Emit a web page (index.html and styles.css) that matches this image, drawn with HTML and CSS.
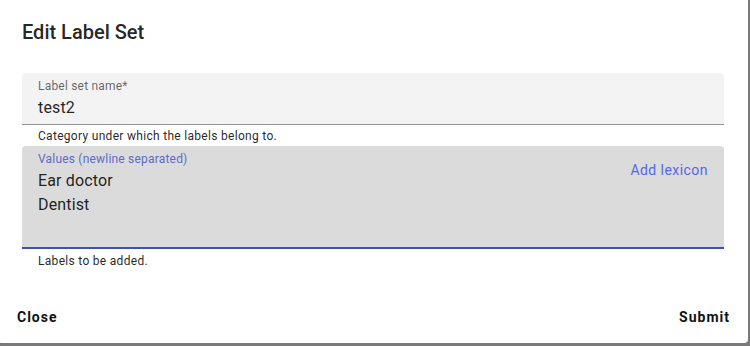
FILE: index.html
```html
<!DOCTYPE html>
<html lang="en">
  <head>
    <meta charset="UTF-8" />
    <meta name="viewport" content="width=device-width, initial-scale=1.0" />
    <title>Edit Label Set</title>
    <link rel="stylesheet" href="styles.css">
  </head>
  <body>
    <div class="dialog">
      <h2 class="dialog-title">Edit Label Set</h2>

      <div class="dialog-content">
        <div class="field">
          <div class="field-main">
            <label class="field-label">Label set name*</label>
            <div class="field-value">test2</div>
          </div>
        </div>
        <p class="helper">Category under which the labels belong to.</p>

        <div class="field field-focused">
          <div class="field-main">
            <label class="field-label">Values (newline separated)</label>
            <div class="field-value">Ear doctor<br />Dentist</div>
          </div>
          <button class="text-btn lexicon-btn">Add lexicon</button>
        </div>
        <p class="helper helper-last">Labels to be added.</p>
      </div>

      <div class="dialog-actions">
        <button class="text-btn action-btn">Close</button>
        <button class="text-btn action-btn">Submit</button>
      </div>
    </div>
  </body>
</html>
```

FILE: styles.css
```css
body {
  margin: 0;
  padding: 0;
  background-color: #7a7a7a;
  font-family: Roboto, "Liberation Sans", sans-serif;
  overflow: hidden;
}
.dialog {
  width: 750px;
  height: 343px;
  margin-left: -2px;
  background-color: #fff;
  border-radius: 0 0 4px 4px;
  display: flex;
  flex-direction: column;
  box-sizing: border-box;
}
.dialog-title {
  margin: 0;
  padding: 16px 24px 12px;
  font-size: 20px;
  line-height: 32px;
  font-weight: 500;
  color: rgba(0, 0, 0, 0.87);
}
.dialog-content {
  padding: 13px 24px 0;
}
.field {
  display: flex;
  align-items: flex-start;
  background-color: #f3f3f3;
  border-radius: 4px 4px 0 0;
  border-bottom: 1px solid #949494;
  padding: 5px 16px 4px;
}
.field-main {
  flex: 1;
}
.field-label {
  display: block;
  font-size: 12px;
  line-height: 16px;
  color: rgba(0, 0, 0, 0.6);
  letter-spacing: 0.2px;
}
.field-value {
  margin-top: 1.5px;
  font-size: 16px;
  line-height: 24px;
  color: rgba(0, 0, 0, 0.87);
  letter-spacing: 0.15px;
}
.field-focused {
  background-color: #dbdbdb;
  border-bottom: 2px solid #3f51b5;
  padding-bottom: 30px;
}
.field-focused .field-label {
  color: #5c6bc8;
}
.field-focused .field-value {
  margin-top: 2px;
  line-height: 24px;
}
.helper {
  margin: 1px 16px 0;
  font-size: 12px;
  line-height: 20px;
  color: rgba(0, 0, 0, 0.87);
  letter-spacing: 0.3px;
}
.helper-last {
  margin-top: 2px;
}
.text-btn {
  border: none;
  background: none;
  font-family: inherit;
  cursor: pointer;
}
.lexicon-btn {
  margin: 3px -8px 0 0;
  padding: 6px 8px;
  font-size: 14px;
  line-height: 20px;
  color: #5468e8;
  letter-spacing: 0.45px;
}
.dialog-actions {
  margin-top: auto;
  display: flex;
  justify-content: space-between;
  padding: 0 10px 8px 11px;
}
.action-btn {
  padding: 6px 8px;
  font-size: 14px;
  line-height: 24.5px;
  font-weight: 700;
  letter-spacing: 1px;
  color: #111;
}
```
